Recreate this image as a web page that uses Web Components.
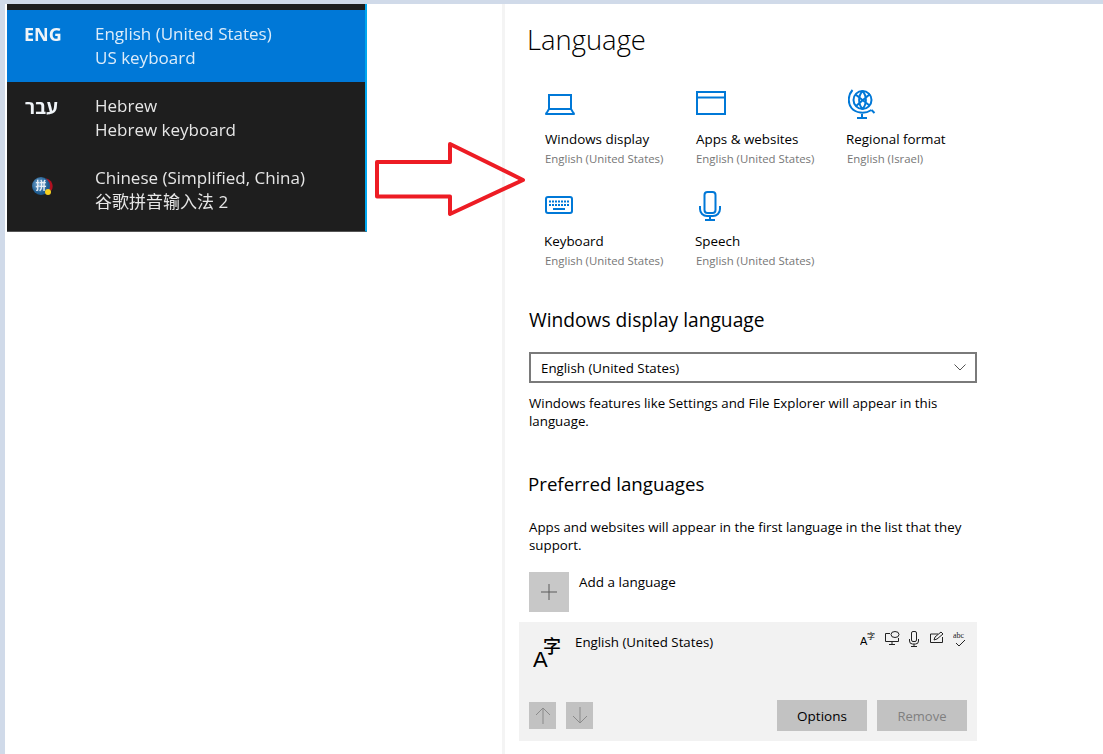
<!DOCTYPE html>
<html><head><meta charset="utf-8"><style>
html,body{margin:0;padding:0;background:#fff}
body{width:1103px;height:754px;overflow:hidden;font-family:"Open Sans","Noto Sans CJK SC",sans-serif}
</style></head><body>
<x-app>
  <x-tray slot="left">
    <x-tray-row active badge="ENG" title-text="English (United States)" sub="US keyboard"></x-tray-row>
    <x-tray-row badge="עבר" title-text="Hebrew" sub="Hebrew keyboard"></x-tray-row>
    <x-tray-row ime title-text="Chinese (Simplified, China)" sub="谷歌拼音输入法 2"></x-tray-row>
  </x-tray>
  <x-arrow slot="left"></x-arrow>
  <x-settings slot="right"></x-settings>
</x-app>
<script>
const el=(name,html)=>{customElements.define(name,class extends HTMLElement{
  constructor(){super();this.attachShadow({mode:'open'});if(typeof html!=='function')this.shadowRoot.innerHTML=html;}
  connectedCallback(){if(typeof html==='function'){this.shadowRoot.innerHTML=html(this);}}
});};
const BLUE='#0078d7';
const ICONS={
laptop:`<svg width="30" height="21" viewBox="0 0 30 21" fill="none" stroke="${BLUE}" stroke-width="2"><path d="M4 15V1h22v14"/><path d="M1 20c0-1 .8-1.500 1.500-2.500L4 15h22l1.500 2.500c.7 1 1.500 1.500 1.500 2.500z" stroke-linejoin="round"/></svg>`,
window:`<svg width="30" height="27" viewBox="0 0 30 27" fill="none" stroke="${BLUE}" stroke-width="2"><rect x="1" y="1" width="28" height="22"/><path d="M1 6.500h28" /></svg>`,
globe:`<svg width="28" height="30" viewBox="0 0 28 30" fill="none" stroke="${BLUE}" stroke-width="2" style="margin-left:1px"><circle cx="14.500" cy="11" r="9"/><path d="M4.500 1C0 6-.5 14 3.500 19c4 5 13 6.500 20 2"/><path d="M23.500 21l3 3M14 25v3.500M9 29h10"/><path d="M7.500 5.500l14 11M22 5L8 17M14.500 2c-4.500 5-4.500 13 0 18M14.500 2c4.500 5 4.500 13 0 18" stroke-width="2"/></svg>`,
keyboard:`<svg width="28" height="20" viewBox="0 0 28 20" fill="none" stroke="${BLUE}" stroke-width="2"><rect x="1" y="1" width="26" height="16" rx="2"/><path d="M4 5.500h20M4 9h20" stroke-dasharray="2 1" stroke-width="2"/><path d="M8 13h12" stroke-width="2"/></svg>`,
mic:`<svg width="22" height="30" viewBox="0 0 22 30" fill="none" stroke="${BLUE}" stroke-width="2" style="margin-left:3px"><rect x="5.500" y="1" width="11" height="21" rx="3"/><path d="M1 15v3a7 7 0 0 0 7 7h6a7 7 0 0 0 7-7v-3M11 25v3.500M6 29h10"/></svg>`,
};
el('x-app',`<style>
:host{display:flex;flex-direction:column;width:1103px;height:754px;background:#fff}
.top{height:4px;background:#d0dae9;flex:none}
.main{display:flex;flex:1;min-height:0}
.strip{width:5px;background:#d0dae9;flex:none}
.left{width:497px;flex:none;display:flex;align-items:flex-start}
.right{flex:1;border-left:3px solid #f4f4f4;min-width:0}
</style><div class="top"></div><div class="main"><div class="strip"></div>
<div class="left"><slot name="left"></slot></div>
<div class="right"><slot name="right"></slot></div></div>`);
el('x-tray',`<style>
:host{display:block;flex:none;box-sizing:border-box;width:360px;margin-left:2px;background:#1e1e1e;padding-top:6px;height:228px;border-right:2px solid #00a8f0;border-bottom:1px solid #555;color:#e9e9e9}
</style><slot></slot>`);
el('x-tray-row',h=>{
 const a=h.hasAttribute('active'),ime=h.hasAttribute('ime');
 const badge=ime?`<svg width="22" height="20" viewBox="0 0 22 20"><defs><radialGradient id="g" cx=".4" cy=".4"><stop offset="0" stop-color="#7fb0d8"/><stop offset="1" stop-color="#1d5a8e"/></radialGradient></defs><path d="M14 1.500a8 8 0 0 1 5.500 12l-5-2z" fill="#b01020"/><circle cx="9" cy="9" r="9" fill="url(#g)"/><text x="9" y="13" font-size="11" text-anchor="middle" fill="#e8eef5" font-family="Noto Sans CJK SC">拼</text><circle cx="16" cy="15" r="3" fill="#f8d020"/></svg>`:h.getAttribute('badge');
 return `<style>
:host{display:flex;height:72px;box-sizing:border-box;background:${a?BLUE:'transparent'};color:${a?'#dcecfa':'#e6e6e6'};filter:blur(.35px)}
.b{width:88px;flex:none;box-sizing:border-box;padding:${ime?'21px 0 0 25px':a?'9px 0 0 17px':'10px 0 0 18px'};font-weight:700;font-size:${a?18:19}px;line-height:30px;color:#f0f4f8;font-family:"Open Sans","DejaVu Sans",sans-serif}
.t{padding-top:12px;font-size:17px;line-height:24px;white-space:nowrap;font-family:"Open Sans","Noto Sans CJK SC",sans-serif}
</style><div class="b">${badge}</div><div class="t"><div>${h.getAttribute('title-text')}</div><div>${h.getAttribute('sub')}</div></div>`});
el('x-arrow',`<style>:host{display:block;flex:none;width:0;height:90px;margin:136px 0 0 8px;position:relative;z-index:1}svg{display:block;overflow:visible}</style>
<svg width="156" height="76" viewBox="0 0 156 76"><polygon points="2,22 75,22 75,4 148,40 75,74 75,56.500 2,56.500" fill="none" stroke="#ed1c24" stroke-width="4" stroke-linejoin="round"/></svg>`);
el('x-tile',h=>`<style>
:host{display:block;height:102px;box-sizing:border-box;color:#000}
.i{height:34px;display:flex;align-items:center}
svg{display:block}
.l{margin-top:8px;font-size:13.400px;line-height:20px;white-space:nowrap;margin-left:${h.hasAttribute('nudge')?'-1px':'0'}}
.s{margin-top:1px;font-size:11.400px;line-height:18px;color:#767676;white-space:nowrap}
</style><div class="i">${ICONS[h.getAttribute('icon')]}</div><div class="l">${h.getAttribute('label')}</div><div class="s">${h.getAttribute('sub')}</div>`);
el('x-h',`<style>:host{display:block;font-size:19.200px;line-height:28px;color:#000}:host([small]){font-size:18.700px;margin-left:-1px}</style><slot></slot>`);
el('x-p',`<style>:host{display:block;font-size:13.300px;line-height:18px;color:#000}</style><slot></slot>`);
el('x-select',`<style>:host{display:flex;align-items:center;justify-content:space-between;box-sizing:border-box;width:448px;height:31px;border:2px solid #7a7a7a;padding:0 9px 0 10px;font-size:13.300px;color:#000}</style><slot></slot><svg width="12" height="7" viewBox="0 0 12 7" fill="none" stroke="#555"><path d="M.5.5L6 6 11.500.5"/></svg>`);
el('x-btn',`<style>:host{display:flex;align-items:center;justify-content:center;background:#c2c2c2;font-size:13.500px;color:#000;width:90px;height:31px}:host([disabled]){color:#7f7f7f;font-size:13px}</style><slot></slot>`);
el('x-square',`<style>:host{display:flex;align-items:center;justify-content:center;background:#c2c2c2;width:27px;height:27px}</style><slot></slot>`);
el('x-lang-item',`<style>
:host{display:flex;flex-direction:column;box-sizing:border-box;width:458px;height:119px;background:#f2f2f2;margin-left:-10px;padding:0 10px}
.top{display:flex;height:78px}
.glyph{width:46px;padding:11px 0 0 4px;box-sizing:border-box}
.name{font-size:13.300px;line-height:20px;padding-top:10px;flex:1}
.feat{display:flex;gap:8.500px;padding-top:9px;align-items:flex-start;height:20px}
.bot{display:flex;align-items:center;height:31px}
.spacer{flex:1}
.gap{width:10px}
svg{display:block}
</style>
<div class="top"><div class="glyph"><svg width="34" height="40" viewBox="0 0 34 40"><text x="0" y="34" font-size="22" font-family="Liberation Sans">A</text><text x="10" y="20" font-size="18" font-weight="500" font-family="Noto Sans CJK SC">字</text></svg></div>
<div class="name"><slot></slot></div>
<div class="feat">
<svg width="15" height="15" viewBox="0 0 15 15"><text x="0" y="14" font-size="11" font-family="Liberation Sans">A</text><text x="7" y="8" font-size="8" font-family="Noto Sans CJK SC">字</text></svg>
<svg width="16" height="15" viewBox="0 0 16 15" fill="none" stroke="#222"><path d="M6 2.500H1.500v8h13V7M8 11v3M5 13.500h6"/><ellipse cx="11" cy="3.500" rx="4" ry="3"/></svg>
<svg width="12" height="16" viewBox="0 0 12 16" fill="none" stroke="#222"><rect x="3.500" y=".5" width="5" height="10" rx="1.500"/><path d="M1.500 8v2a3 3 0 0 0 3 3h3a3 3 0 0 0 3-3V8M6 13v2M3 15.500h6"/></svg>
<svg width="16" height="14" viewBox="0 0 16 14" fill="none" stroke="#222"><path d="M9 3H1.500v8.500h12V6"/><path d="M5 9l1-3 6-5 2 2-6 5z"/></svg>
<svg width="14" height="16" viewBox="0 0 14 16" fill="none" stroke="#222"><path d="M3 12l3 3 6-6"/><text x="0" y="7" font-size="8" fill="#222" stroke="none" font-family="Liberation Serif">abc</text></svg>
</div></div>
<div class="bot"><slot name="up"></slot><div class="gap"></div><slot name="down"></slot><div class="spacer"></div><slot name="options"></slot><div class="gap"></div><slot name="remove"></slot></div>`);
el('x-settings',`<style>
:host{display:block;padding:0 0 0 22px;color:#000}
h1{margin:0;font-weight:300;font-size:27.400px;line-height:40px;padding-top:16px;height:40px}
.grid{display:grid;grid-template-columns:151px 151px 151px;margin:27px 0 0 18px}
.sec1{margin:15px 0 0 2px}
.sel{margin-top:18px}
.p1{margin-top:11px}
.sec2{margin:40px 0 0 2px}
.p2{margin:20px 0 0 2px}
.add{display:flex;margin:18px 0 0 2px;height:40px}
.addsq{width:40px;height:40px;background:#c8c8c8;display:flex;align-items:center;justify-content:center}
.addt{padding-left:10px;font-size:13.500px;line-height:20px}
.item{margin:10px 0 0 2px}
svg{display:block}
</style>
<h1>Language</h1>
<div class="grid">
<x-tile icon="laptop" label="Windows display" sub="English (United States)"></x-tile>
<x-tile icon="window" label="Apps &amp; websites" sub="English (United States)"></x-tile>
<x-tile icon="globe" nudge label="Regional format" sub="English (Israel)"></x-tile>
<x-tile icon="keyboard" nudge label="Keyboard" sub="English (United States)"></x-tile>
<x-tile icon="mic" nudge label="Speech" sub="English (United States)"></x-tile>
</div>
<div class="sec1"><x-h>Windows display language</x-h>
<div class="sel"><x-select>English (United States)</x-select></div>
<div class="p1"><x-p>Windows features like Settings and File Explorer will appear in this<br>language.</x-p></div></div>
<div class="sec2"><x-h small>Preferred languages</x-h></div>
<div class="p2"><x-p>Apps and websites will appear in the first language in the list that they<br>support.</x-p></div>
<div class="add"><div class="addsq"><svg width="16" height="16" viewBox="0 0 16 16" stroke="#5a5a5a"><path d="M8 0v16M0 8h16"/></svg></div><div class="addt">Add a language</div></div>
<div class="item"><x-lang-item>English (United States)
<x-square slot="up"><svg width="16" height="17" viewBox="0 0 16 17" fill="none" stroke="#8a8a8a"><path d="M8 17V1M1 8l7-7 7 7"/></svg></x-square>
<x-square slot="down"><svg width="16" height="17" viewBox="0 0 16 17" fill="none" stroke="#8a8a8a"><path d="M8 0v16M1 9l7 7 7-7"/></svg></x-square>
<x-btn slot="options">Options</x-btn><x-btn slot="remove" disabled>Remove</x-btn>
</x-lang-item></div>`);
</script>
</body></html>
